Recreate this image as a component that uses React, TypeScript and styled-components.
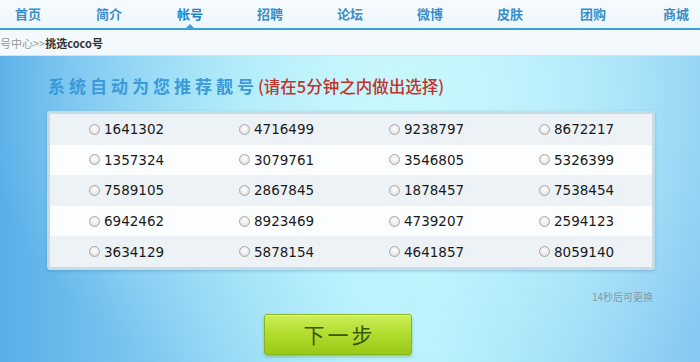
import React from "react";
import styled, { createGlobalStyle } from "styled-components";

const Global = createGlobalStyle`
  html, body { margin: 0; padding: 0; }
  body {
    width: 700px;
    height: 362px;
    overflow: hidden;
    font-family: "Noto Sans CJK SC", "DejaVu Sans", sans-serif;
  }
`;

const Page = styled.div`
  width: 700px;
  height: 362px;
  display: flex;
  flex-direction: column;
  overflow: hidden;
`;

const Nav = styled.nav`
  height: 28px;
  flex: none;
  display: flex;
  align-items: center;
  background: linear-gradient(#f6fbfe, #eef7fc);
  border-bottom: 2px solid #3b9fd9;
`;

const NavList = styled.div`
  display: flex;
  margin-left: -12px;
`;

const NavItem = styled.a<{ $active?: boolean; $w?: number }>`
  position: relative;
  width: ${(p) => p.$w ?? 80}px;
  text-align: center;
  font-size: 13px;
  font-weight: 700;
  line-height: 28px;
  color: ${(p) => (p.$active ? "#1f83c9" : "#3a8fc9")};
  text-decoration: none;
  &::after {
    content: "";
    display: ${(p) => (p.$active ? "block" : "none")};
    position: absolute;
    left: 50%;
    bottom: -2px;
    margin-left: -6px;
    border-left: 6px solid transparent;
    border-right: 6px solid transparent;
    border-bottom: 6px solid #3b9fd9;
  }
`;

const Crumb = styled.div`
  height: 25px;
  flex: none;
  display: flex;
  align-items: center;
  background: #f3f9fd;
  border-bottom: 1px solid #d7e3ea;
  font-size: 11px;
  color: #999;
  white-space: nowrap;
`;

const CrumbCurrent = styled.b`
  color: #333;
  font-weight: 700;
`;

const Main = styled.main`
  flex: 1;
  display: flex;
  flex-direction: column;
  padding: 20px 45px 0 47px;
  background:
    radial-gradient(ellipse 420px 330px at 400px 40px, rgba(200, 248, 253, 0.95), rgba(200, 248, 253, 0) 100%),
    linear-gradient(90deg, #5aaee9 0%, #84cdf2 25%, #b2eefb 50%, #b8f0fc 62%, #9cd9f7 85%, #86c8f1 100%);
`;

const Title = styled.h1`
  margin: 0 0 15px 1px;
  height: 20px;
  line-height: 20px;
  font-size: 17px;
  font-weight: 700;
  white-space: nowrap;
`;

const TitleBlue = styled.span`
  color: #3a9ad9;
  letter-spacing: 4px;
`;

const TitleRed = styled.span`
  color: #c2332a;
  font-size: 16.5px;
  font-weight: 500;
`;

const Board = styled.div`
  width: 602px;
  border: 3px solid #c6dde8;
  border-radius: 3px;
  box-shadow: 0 1px 3px rgba(40, 110, 160, 0.35);
  background: #fafcfd;
`;

const Row = styled.div<{ $alt: boolean }>`
  display: grid;
  grid-template-columns: repeat(4, 150px);
  height: 30.6px;
  background: ${(p) => (p.$alt ? "#edf2f6" : "#fcfdfe")};
`;

const Cell = styled.label`
  display: flex;
  align-items: center;
  gap: 4px;
  padding-left: 39px;
  font-family: "DejaVu Sans", sans-serif;
  font-size: 13.5px;
  color: #1a1a1a;
`;

const Radio = styled.span`
  width: 9px;
  height: 9px;
  border-radius: 50%;
  border: 1px solid #a8a8a8;
  background: radial-gradient(circle at 50% 40%, #fafafa 20%, #d6d6d6 100%);
  flex: none;
`;

const Hint = styled.div`
  align-self: flex-end;
  margin: 20px 2px 0 0;
  font-size: 10px;
  line-height: 14px;
  color: #8797a6;
`;

const NextButton = styled.button`
  align-self: flex-start;
  margin: 10px 0 0 217px;
  width: 148px;
  height: 41px;
  border: 1px solid #86b61a;
  border-radius: 3px;
  background: linear-gradient(#cdee5a 0%, #b2de30 45%, #98c818 100%);
  box-shadow: 0 2px 3px rgba(60, 120, 30, 0.35), inset 0 1px 0 rgba(255, 255, 255, 0.5);
  font-family: "Noto Sans CJK SC", sans-serif;
  font-size: 21px;
  letter-spacing: 3px;
  color: #3a560e;
  padding: 0 0 0 3px;
`;

const navItems = ["首页", "简介", "帐号", "招聘", "论坛", "微博", "皮肤", "团购", "商城"];

const numbers = [
  ["1641302", "4716499", "9238797", "8672217"],
  ["1357324", "3079761", "3546805", "5326399"],
  ["7589105", "2867845", "1878457", "7538454"],
  ["6942462", "8923469", "4739207", "2594123"],
  ["3634129", "5878154", "4641857", "8059140"],
];

export default function App() {
  return (
    <Page>
      <Global />
      <Nav>
        <NavList>
          {navItems.map((t, i) => (
            <NavItem
              key={t}
              $active={t === "帐号"}
              $w={i === 1 ? 82 : i === 7 ? 86 : 80}
            >
              {t}
            </NavItem>
          ))}
        </NavList>
      </Nav>
      <Crumb>
        号中心&gt;&gt;<CrumbCurrent>挑选coco号</CrumbCurrent>
      </Crumb>
      <Main>
        <Title>
          <TitleBlue>系统自动为您推荐靓号</TitleBlue>
          <TitleRed>(请在5分钟之内做出选择)</TitleRed>
        </Title>
        <Board>
          {numbers.map((row, r) => (
            <Row key={r} $alt={r % 2 === 0}>
              {row.map((n) => (
                <Cell key={n}>
                  <Radio />
                  {n}
                </Cell>
              ))}
            </Row>
          ))}
        </Board>
        <Hint>14秒后可更换</Hint>
        <NextButton>下一步</NextButton>
      </Main>
    </Page>
  );
}
